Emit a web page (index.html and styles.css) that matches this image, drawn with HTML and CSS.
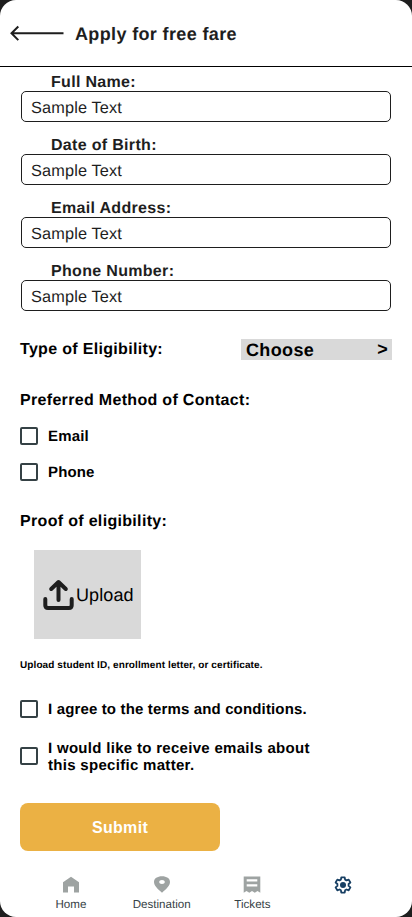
FILE: index.html
```html
<!DOCTYPE html>
<html lang="en">
<head>
<meta charset="utf-8">
<title>Apply for free fare</title>
<link rel="stylesheet" href="styles.css">
</head>
<body>
<div class="screen">
  <header class="header">
    <svg class="back" width="54" height="16" viewBox="0 0 54 16" fill="none" stroke="#1e1e1e" stroke-width="2"><path d="M8.300 1.500 1.500 8.300l6.800 6.800M1.500 8.300H53.500"/></svg>
    <h1 class="title">Apply for free fare</h1>
  </header>
  <main class="form">
    <div class="field"><label class="label">Full Name:</label><div class="input">Sample Text</div></div>
    <div class="field"><label class="label">Date of Birth:</label><div class="input">Sample Text</div></div>
    <div class="field"><label class="label">Email Address:</label><div class="input">Sample Text</div></div>
    <div class="field"><label class="label">Phone Number:</label><div class="input">Sample Text</div></div>
    <div class="eligibility">
      <h2 class="heading type">Type of Eligibility:</h2>
      <div class="select"><span>Choose</span><span class="chevron">&gt;</span></div>
    </div>
    <h2 class="heading contact">Preferred Method of Contact:</h2>
    <div class="check"><span class="box"></span><span>Email</span></div>
    <div class="check"><span class="box"></span><span>Phone</span></div>
    <h2 class="heading proof">Proof of eligibility:</h2>
    <div class="upload">
      <svg width="32" height="32" viewBox="0 0 32 32" fill="none" stroke="#1e1e1e" stroke-width="4" stroke-linecap="round" stroke-linejoin="round"><path d="M2.300 20V26.200Q2.300 29 5 29H26Q28.700 29 28.700 26.200V20M15.500 21V3M8.200 10 15.500 3 22.800 10"/></svg>
      <span>Upload</span>
    </div>
    <p class="note">Upload student ID, enrollment letter, or certificate.</p>
    <div class="check terms"><span class="box"></span><span>I agree to the terms and conditions.</span></div>
    <div class="check emails"><span class="box"></span><span>I would like to receive emails about<br>this specific matter.</span></div>
    <button class="submit">Submit</button>
  </main>
  <nav class="nav">
    <div class="tab"><svg width="18" height="18" viewBox="0 0 18 18" fill="#9ea3a2"><path d="M9 .8 17 6.300v10.200H12V10.500H6v6H1V6.300z"/></svg><span>Home</span></div>
    <div class="tab"><svg width="18" height="18" viewBox="0 0 18 18" fill="#9ea3a2" fill-rule="evenodd"><path d="M9 .3c4.600 0 8 2.200 8 5.700 0 3.700-3.700 7-8 10.700C4.700 13 1 9.700 1 6 1 2.500 4.400.3 9 .3zM9 4C7.300 4 6.200 4.900 6.200 6S7.300 8 9 8s2.800-.9 2.800-2S10.700 4 9 4z"/></svg><span>Destination</span></div>
    <div class="tab"><svg width="18" height="18" viewBox="0 0 18 18" fill="#9ea3a2" fill-rule="evenodd"><path d="M.7.500h16.600v16.200l-2.800-1.700-2.700 1.700L9 15l-2.700 1.700L3.500 15 .7 16.700zM3.700 3.300v2.200h10.600V3.300zM3.700 8.300v2.200h10.600V8.300z"/></svg><span>Tickets</span></div>
    <div class="tab"><svg width="18" height="18" viewBox="0 0 18 18"><path d="M7.300 1.300h3.400l.4 2.300 1.400.8 2.200-.8 1.700 2.900-1.800 1.500v1.900l1.800 1.500-1.700 2.900-2.200-.8-1.400.8-.4 2.300H7.300l-.4-2.300-1.400-.8-2.200.8-1.700-2.900L3.400 9.900V8L1.600 6.500l1.700-2.900 2.200.8 1.400-.8z" fill="none" stroke="#173f63" stroke-width="1.800" stroke-linejoin="round"/><circle cx="9" cy="9" r="3" fill="#173f63"/></svg></div>
  </nav>
</div>
</body>
</html>
```
FILE: styles.css
```css
* { box-sizing: border-box; }
body {
  margin: 0;
  background: #1e1e1e;
  font-family: "Liberation Sans", Arial, sans-serif;
  text-rendering: geometricPrecision;
  color: #000;
}
.screen {
  width: 412px;
  height: 917px;
  display: flex;
  flex-direction: column;
  background: #fff;
  border-radius: 16px;
  overflow: hidden;
  white-space: nowrap;
}
.header {
  height: 67px;
  flex: none;
  display: flex;
  align-items: center;
  gap: 11px;
  padding-left: 10px;
  border-bottom: 1px solid #000;
  color: #1e1e1e;
}
.title { margin: 1px 0 0; font-size: 18px; line-height: 22px; letter-spacing: 0.36px; }
.form {
  flex: 1;
  display: flex;
  flex-direction: column;
  padding: 6px 20px 0;
}
.field { height: 63px; padding-left: 1px; color: #1e1e1e; }
.label {
  display: block;
  height: 18px;
  padding-left: 30px;
  font-size: 16px;
  font-weight: 700;
  line-height: 20px;
  letter-spacing: 0.32px;
}
.input {
  width: 370px;
  height: 31px;
  padding-left: 9px;
  border: 1px solid #1e1e1e;
  border-radius: 5px;
  font-size: 16.3px;
  line-height: 33px;
  letter-spacing: 0.16px;
}
.eligibility {
  display: flex;
  justify-content: space-between;
  height: 21px;
  margin-top: 14px;
}
.heading { margin: 0; font-size: 16px; line-height: 20px; letter-spacing: 0.32px; }
.type { line-height: 22px; }
.select {
  width: 151px;
  height: 21px;
  display: flex;
  justify-content: space-between;
  padding: 0 4px 0 5px;
  background: #d9d9d9;
  font-size: 18px;
  font-weight: 700;
  line-height: 22px;
  letter-spacing: 0.36px;
}
.chevron { line-height: 20px; }
.contact { margin: 31px 0 7px; }
.check {
  display: flex;
  align-items: center;
  gap: 10px;
  height: 36px;
  font-size: 15px;
  font-weight: 700;
  line-height: 17px;
  letter-spacing: 0.15px;
}
.check span + span { padding-top: 1px; }
.box { width: 18px; height: 18px; border: 2px solid #354145; border-radius: 2px; flex: none; }
.proof { margin: 22px 0 18px; }
.upload {
  width: 107px;
  height: 89px;
  margin-left: 14px;
  padding-left: 9px;
  display: flex;
  align-items: center;
  gap: 1px;
  background: #d9d9d9;
  font-size: 18px;
  line-height: 20px;
  letter-spacing: 0.1px;
}
.note { margin: 20px 0 0; font-size: 10px; font-weight: 700; line-height: 13px; height: 12px; letter-spacing: 0.1px; }
.terms { margin-top: 20px; }
.emails { margin-top: 11px; letter-spacing: 0.3px; }
.submit {
  width: 200px;
  height: 48px;
  margin-top: 29px;
  padding: 2px 0 0;
  border: 0;
  border-radius: 8px;
  background: #ebb144;
  color: #fff;
  font: 700 16px "Liberation Sans", Arial, sans-serif;
  letter-spacing: 0.32px;
}
.nav {
  height: 41px;
  flex: none;
  display: grid;
  grid-template-columns: repeat(4, 90.8px);
  padding-left: 25.5px;
}
.tab {
  display: flex;
  flex-direction: column;
  align-items: center;
  gap: 4px;
  color: #354145;
  font-size: 11.6px;
  line-height: 13px;
}
```
